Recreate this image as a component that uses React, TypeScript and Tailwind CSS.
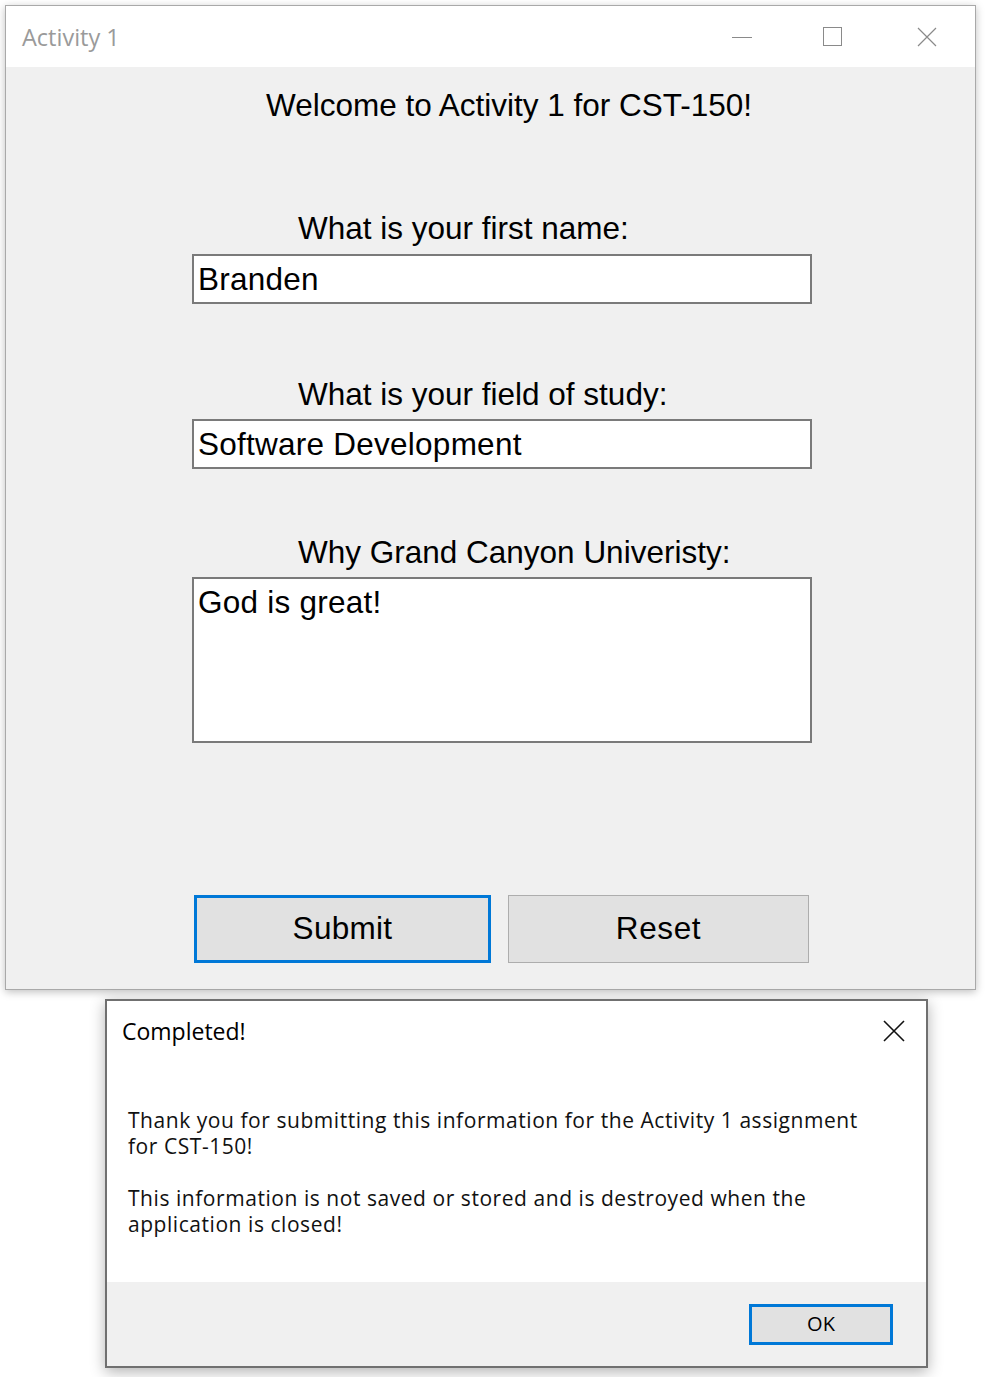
import React from 'react';

const formFont = { fontFamily: '"Liberation Sans", Arial, sans-serif' };
const uiFont = { fontFamily: '"Open Sans", "Noto Sans", sans-serif' };

function TitleButtons() {
  return (
    <div className="flex items-center h-full">
      <svg width="20" height="20" viewBox="0 0 20 20">
        <line x1="0" y1="10.5" x2="20" y2="10.5" stroke="#8a8a8a" strokeWidth="1" />
      </svg>
      <svg width="20" height="20" viewBox="0 0 20 20" className="ml-[71px]">
        <rect x="0.5" y="0.5" width="18" height="18" fill="none" stroke="#8a8a8a" strokeWidth="1" />
      </svg>
      <svg width="20" height="20" viewBox="0 0 20 20" className="ml-[74px]">
        <path d="M1 1 L19 19 M19 1 L1 19" stroke="#8a8a8a" strokeWidth="1.2" fill="none" />
      </svg>
    </div>
  );
}

function Field({ label, value, tall, first }: { label: string; value: string; tall?: boolean; first?: boolean }) {
  return (
    <div className="flex flex-col">
      <div className="h-[36px] leading-[36px] pl-[106px] text-[31.5px] text-black" style={formFont}>
        {label}
      </div>
      <div
        className={`${first ? 'mt-[8px]' : 'mt-[7px]'} w-[620px] bg-white border-2 border-[#7a7a7a] pl-[4px] text-[31.5px] text-black tracking-[0.25px] ${
          tall ? 'h-[166px] pt-[5px] leading-[36px]' : 'h-[50px] leading-[46px]'
        }`}
        style={formFont}
      >
        {value}
      </div>
    </div>
  );
}

export default function App() {
  return (
    <div className="w-[990px] h-[1377px] bg-white relative overflow-hidden">
      {/* main window */}
      <div className="ml-[5px] mt-[5px] w-[971px] border border-[#a9a9a9] shadow-[0_2px_8px_rgba(0,0,0,0.25)] bg-[#f0f0f0]">
        <div className="h-[61px] bg-white flex items-center justify-between pl-[16px] pr-[38px]">
          <span className="text-[23.5px] text-[#9a9a9a] mt-[2px]" style={uiFont}>
            Activity 1
          </span>
          <TitleButtons />
        </div>
        <div className="h-[922px] flex flex-col">
          <div
            className="mt-[20px] h-[36px] leading-[36px] pl-[260px] text-[31.5px] text-black"
            style={formFont}
          >
            Welcome to Activity 1 for CST-150!
          </div>
          <div className="pl-[186px] flex flex-col">
            <div className="mt-[87px]">
              <Field label="What is your first name:" value="Branden" first />
            </div>
            <div className="mt-[72px]">
              <Field label="What is your field of study:" value="Software Development" />
            </div>
            <div className="mt-[65px]">
              <Field label="Why Grand Canyon Univeristy:" value="God is great!" tall />
            </div>
            <div className="mt-[152px] flex gap-[17px] pl-[2px]">
              <button
                className="w-[297px] h-[68px] bg-[#e1e1e1] border-[3px] border-[#0078d7] text-[31.5px] tracking-[0.3px] text-black"
                style={formFont}
              >
                Submit
              </button>
              <button
                className="w-[301px] h-[68px] bg-[#e1e1e1] border border-[#adadad] text-[31.5px] tracking-[0.6px] text-black"
                style={formFont}
              >
                Reset
              </button>
            </div>
          </div>
        </div>
      </div>

      {/* message box */}
      <div
        className="ml-[105px] mt-[9px] w-[823px] h-[369px] border-2 border-[#707070] bg-white shadow-[0_4px_14px_rgba(0,0,0,0.3)] flex flex-col"
        style={uiFont}
      >
        <div className="h-[60px] flex items-center justify-between pl-[15px] pr-[21px]">
          <span className="text-[23px] text-black">Completed!</span>
          <svg width="22" height="22" viewBox="0 0 22 22">
            <path d="M1 1 L21 21 M21 1 L1 21" stroke="#111" strokeWidth="1.6" fill="none" />
          </svg>
        </div>
        <div className="flex-1 pl-[21px] pt-[46px] text-[21px] leading-[26px] text-[#111] tracking-[0.55px]">
          <p>Thank you for submitting this information for the Activity 1 assignment</p>
          <p>for CST-150!</p>
          <p className="mt-[26px]">This information is not saved or stored and is destroyed when the</p>
          <p>application is closed!</p>
        </div>
        <div className="h-[84px] bg-[#f0f0f0] flex items-center justify-end pr-[33px]">
          <button className="w-[144px] h-[41px] bg-[#e1e1e1] border-[3px] border-[#0078d7] text-[20px] text-black">
            OK
          </button>
        </div>
      </div>
    </div>
  );
}
